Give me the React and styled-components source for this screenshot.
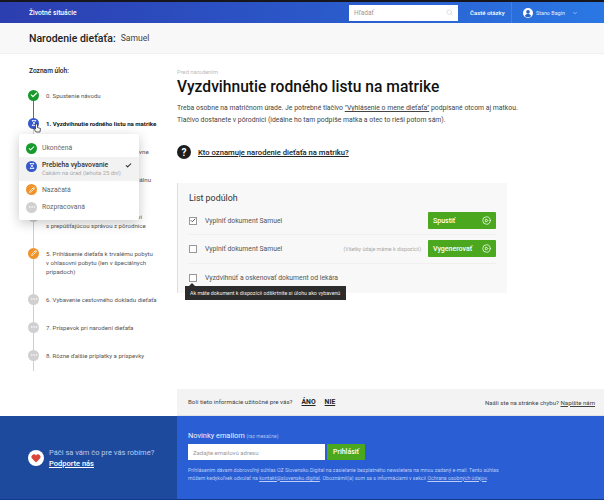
import React from 'react';
import styled, { createGlobalStyle } from 'styled-components';
import { Check, Pencil, MoreHorizontal, Hourglass, Search, ChevronDown, CirclePlay, Heart } from 'lucide-react';

const GlobalStyle = createGlobalStyle`
  html, body { margin: 0; padding: 0; background: #fff; }
  body { font-family: Roboto, "Liberation Sans", sans-serif; color: #333; overflow: hidden; }
  * { box-sizing: border-box; }
`;

const Page = styled.div`
  width: 604px;
  height: 500px;
  display: flex;
  flex-direction: column;
  border-top: 2px solid #16161c;
  border-bottom: 1px solid #123a8c;
  overflow: hidden;
`;

const Header = styled.header`
  height: 21px;
  flex: none;
  display: flex;
  align-items: center;
  padding-left: 29px;
  background: linear-gradient(90deg, #2c3eb0 0%, #2b57c8 50%, #2a78e4 100%);
  color: #fff;
  font-size: 6.7px;
  font-weight: 500;
`;

const Brand = styled.div`
  width: 320px;
`;

const SearchBox = styled.div`
  width: 109px;
  height: 16px;
  background: #fff;
  display: flex;
  align-items: center;
  justify-content: space-between;
  padding: 0 5px;
  color: #999;
  font-size: 6.5px;
  font-weight: 400;
`;

const HeaderLink = styled.div`
  width: 54px;
  height: 100%;
  padding-left: 12px;
  display: flex;
  align-items: center;
  font-size: 6px;
  border-right: 1px solid rgba(255, 255, 255, 0.12);
  white-space: nowrap;
`;

const UserMenu = styled.div`
  display: flex;
  align-items: center;
  gap: 3px;
  padding-left: 11px;
  font-size: 5.4px;
  font-weight: 400;
  color: #e4edff;
`;

const TitleBar = styled.div`
  height: 31px;
  flex: none;
  display: flex;
  align-items: center;
  gap: 5px;
  padding-left: 29px;
  background: #f8f8f8;
  border-bottom: 1px solid #f0f0f0;
`;

const TitleMain = styled.h2`
  margin: 0;
  font-size: 10.5px;
  font-weight: 500;
  color: #222;
`;

const TitleSub = styled.span`
  font-size: 8.6px;
  color: #444;
`;

const Body = styled.main`
  flex: 1;
  display: flex;
  padding-left: 29px;
  position: relative;
`;

const Sidebar = styled.aside`
  width: 148px;
  flex: none;
  position: relative;
  padding-top: 13px;
`;

const SidebarTitle = styled.div`
  font-size: 6.6px;
  font-weight: 500;
  color: #222;
  line-height: 9px;
  margin-bottom: 10px;
`;

const Steps = styled.ol`
  list-style: none;
  margin: 0;
  padding: 0;
`;

const Step = styled.li`
  position: relative;
  padding: 4.5px 0 14.5px 17px;
  font-size: 6.1px;
  line-height: 9px;
  color: ${(p) => (p.$active ? '#111' : '#555')};
  font-weight: ${(p) => (p.$active ? 700 : 400)};
  &::before {
    content: '';
    position: absolute;
    left: 4px;
    top: 9px;
    bottom: -9px;
    width: 1px;
    background: ${(p) => (p.$done ? '#1a9e2d' : '#cfcfcf')};
  }
  &:last-child::before {
    bottom: 3px;
  }
`;

const StepText = styled.div`
  padding-left: 6px;
  text-indent: -6px;
  white-space: nowrap;
`;

const tones = {
  done: '#179a2c',
  active: '#3558cc',
  started: '#f0932b',
  idle: '#d0d0d0',
};

const StatusDot = styled.span`
  width: 11px;
  height: 11px;
  border-radius: 50%;
  flex: none;
  display: flex;
  align-items: center;
  justify-content: center;
  color: #fff;
  background: ${(p) => tones[p.$tone]};
`;

const StepDot = styled(StatusDot)`
  position: absolute;
  left: -1px;
  top: 3.5px;
  z-index: 1;
`;

const StatusMenu = styled.div`
  position: absolute;
  left: -10px;
  top: 80px;
  width: 120px;
  height: 86px;
  padding-top: 5px;
  background: #fff;
  border-radius: 2px;
  box-shadow: 0 3px 12px rgba(0, 0, 0, 0.22);
  z-index: 3;
`;

const StatusRow = styled.div`
  display: flex;
  gap: 5px;
  padding: ${(p) => (p.$selected ? '3.5px 7px 0' : '0 7px')};
  height: ${(p) => p.$height}px;
  align-items: ${(p) => (p.$selected ? 'flex-start' : 'center')};
  position: relative;
  font-size: 6.8px;
  line-height: 8px;
  color: ${(p) => (p.$selected ? '#333' : '#666')};
  font-weight: ${(p) => (p.$selected ? 500 : 400)};
  background: ${(p) => (p.$selected ? '#f2f2f2' : 'transparent')};
`;

const StatusHint = styled.div`
  font-size: 5.9px;
  font-weight: 400;
  color: #aaa;
  line-height: 8px;
`;

const StatusTick = styled.span`
  position: absolute;
  right: 7px;
  top: 4.5px;
  color: #222;
  display: flex;
`;

const Cursor = styled.svg`
  position: absolute;
  left: 4px;
  top: 69px;
  z-index: 2;
`;

const Content = styled.section`
  width: 340px;
  padding-top: 14px;
`;

const Eyebrow = styled.div`
  font-size: 5.8px;
  color: #bbb;
  line-height: 8px;
`;

const Heading = styled.h1`
  margin: 1px 0 0;
  font-size: 15.6px;
  line-height: 20px;
  font-weight: 500;
  color: #111;
  white-space: nowrap;
`;

const Lead = styled.p`
  margin: 6px 0 0;
  font-size: 6.85px;
  line-height: 11.5px;
  color: #444;
  white-space: nowrap;
`;

const LeadLink = styled.span`
  text-decoration: underline;
`;

const Question = styled.div`
  display: flex;
  align-items: center;
  gap: 7px;
  margin-top: 19px;
  font-size: 7.65px;
  font-weight: 500;
  color: #222;
  text-decoration: underline;
`;

const QuestionMark = styled.span`
  width: 14px;
  height: 14px;
  border-radius: 50%;
  background: #1c1c1c;
  color: #fff;
  font-size: 10px;
  font-weight: 700;
  display: flex;
  align-items: center;
  justify-content: center;
`;

const TaskPanel = styled.div`
  position: relative;
  width: 330px;
  height: 110px;
  margin-top: 24px;
  padding: 9px 11px 0;
  background: #f8f8f8;
  border-left: 1px solid #dedede;
`;

const TaskTitle = styled.h3`
  margin: 0 0 3px;
  font-size: 8.9px;
  line-height: 12px;
  font-weight: 400;
  color: #333;
`;

const TaskRow = styled.div`
  height: 28.3px;
  display: flex;
  align-items: center;
  font-size: 6.8px;
  color: #555;
  border-bottom: ${(p) => (p.$last ? 'none' : '1px solid #f0f0f0')};
`;

const Box = styled.span`
  width: 8px;
  height: 8px;
  flex: none;
  margin-right: 8px;
  background: #fff;
  border: 1px solid #999;
  display: flex;
  align-items: center;
  justify-content: center;
  color: #222;
`;

const TaskLabel = styled.span`
  flex: 1;
`;

const TaskNote = styled.span`
  font-size: 5.3px;
  color: #aaa;
  margin-right: 7px;
`;

const GreenButton = styled.button`
  width: ${(p) => p.$width}px;
  height: ${(p) => p.$height}px;
  border: 0;
  padding: 0 5px;
  display: flex;
  align-items: center;
  justify-content: ${(p) => (p.$center ? 'center' : 'space-between')};
  background: #4aa71e;
  color: #fff;
  font-family: inherit;
  font-size: 7px;
  font-weight: 500;
  border-radius: 1px;
`;

const Tooltip = styled.div`
  position: absolute;
  left: 7px;
  top: 103px;
  width: 161px;
  height: 14px;
  background: #2c2c2c;
  color: #eee;
  font-size: 5.3px;
  display: flex;
  align-items: center;
  padding-left: 5px;
  white-space: nowrap;
  &::before {
    content: '';
    position: absolute;
    left: 4px;
    top: -3px;
    border-left: 3px solid transparent;
    border-right: 3px solid transparent;
    border-bottom: 3px solid #2c2c2c;
  }
`;

const Feedback = styled.div`
  height: 27px;
  flex: none;
  margin-left: 177px;
  padding: 0 9px 0 11px;
  display: flex;
  align-items: center;
  background: #f3f3f3;
  font-size: 6.2px;
  color: #444;
  border-bottom: 1px solid #e4e4e4;
`;

const Vote = styled.span`
  margin-left: ${(p) => p.$gap}px;
  font-size: 6.8px;
  font-weight: 700;
  color: #222;
  text-decoration: underline;
`;

const FeedbackRight = styled.span`
  margin-left: auto;
  font-size: 6.1px;
  a {
    color: inherit;
    text-decoration: underline;
  }
`;

const Footer = styled.footer`
  height: 83px;
  flex: none;
  display: flex;
  color: #fff;
`;

const Support = styled.div`
  width: 177px;
  background: #1e4a9e;
  display: flex;
  align-items: center;
  gap: 5px;
  padding-left: 28px;
`;

const HeartBadge = styled.span`
  width: 16px;
  height: 16px;
  border-radius: 50%;
  background: #fff;
  color: #d8473c;
  display: flex;
  align-items: center;
  justify-content: center;
`;

const SupportText = styled.div`
  font-size: 7.5px;
  line-height: 11px;
  color: #b9cbee;
  white-space: nowrap;
`;

const SupportLink = styled.div`
  color: #fff;
  font-weight: 500;
  text-decoration: underline;
`;

const Newsletter = styled.div`
  flex: 1;
  background: #295ed4;
  padding: 15px 0 0 11px;
`;

const NewsTitle = styled.div`
  font-size: 7.4px;
  line-height: 10px;
  color: #eef3ff;
  small {
    font-size: 5px;
    color: #a9c2f3;
  }
`;

const NewsForm = styled.div`
  display: flex;
  gap: 2px;
  margin-top: 3px;
`;

const NewsInput = styled.div`
  width: 137px;
  height: 16px;
  background: #fff;
  color: #999;
  font-size: 6px;
  display: flex;
  align-items: center;
  padding-left: 5px;
`;

const NewsLegal = styled.p`
  margin: 7px 0 0;
  font-size: 5.2px;
  line-height: 7.6px;
  color: #b9cdf6;
  white-space: nowrap;
  a {
    color: inherit;
    text-decoration: underline;
  }
`;

const dots = <MoreHorizontal size={8} />;

const steps = [
  { tone: 'done', text: '0. Spustenie návodu', done: true, icon: <Check size={8} strokeWidth={3.5} /> },
  { tone: 'active', text: '1. Vyzdvihnutie rodného listu na matrike', active: true, icon: <Hourglass size={6} strokeWidth={3} /> },
  { tone: 'idle', text: '2. Prihlásenie do zdravotnej poisťovne', icon: dots },
  { tone: 'idle', text: ['3. Informovanie úradu práce a sociálnu', 'poisťovňu o narodení a'], icon: dots },
  { tone: 'idle', text: ['4. Odovzdanie dokumentov lekárovi', 's prepúšťajúcou správou z pôrodnice'], icon: dots },
  { tone: 'started', text: ['5. Prihlásenie dieťaťa k trvalému pobytu', 'v ohlasovni pobytu (len v špeciálnych', 'prípadoch)'], icon: <Pencil size={6} strokeWidth={3} /> },
  { tone: 'idle', text: '6. Vybavenie cestovného dokladu dieťaťa', icon: dots },
  { tone: 'idle', text: '7. Príspevok pri narodení dieťaťa', icon: dots },
  { tone: 'idle', text: '8. Rôzne ďalšie príplatky a príspevky', icon: dots },
];

export default function App() {
  return (
    <>
      <GlobalStyle />
      <Page>
        <Header>
          <Brand>Životné situácie</Brand>
          <SearchBox>
            Hľadať
            <Search size={7} color="#ccc" />
          </SearchBox>
          <HeaderLink>Časté otázky</HeaderLink>
          <UserMenu>
            <svg width="10" height="10" viewBox="0 0 10 10">
              <circle cx="5" cy="5" r="5" fill="#fff" />
              <circle cx="5" cy="3.9" r="1.8" fill="#2a5fc8" />
              <path d="M1.9 8c.6-1.3 1.8-1.9 3.1-1.9s2.5.6 3.1 1.9a4.2 4.2 0 0 1-6.2 0z" fill="#2a5fc8" />
            </svg>
            Stano Bagin
            <ChevronDown size={6} style={{ marginLeft: 4 }} />
          </UserMenu>
        </Header>
        <TitleBar>
          <TitleMain>Narodenie dieťaťa:</TitleMain>
          <TitleSub>Samuel</TitleSub>
        </TitleBar>
        <Body>
          <Sidebar>
            <SidebarTitle>Zoznam úloh:</SidebarTitle>
            <Steps>
              {steps.map((step) => (
                <Step key={step.tone + step.text} $done={step.done} $active={step.active}>
                  <StepDot $tone={step.tone}>{step.icon}</StepDot>
                  {[].concat(step.text).map((line) => (
                    <StepText key={line}>{line}</StepText>
                  ))}
                </Step>
              ))}
            </Steps>
            <Cursor width="8" height="10" viewBox="0 0 8 10">
              <path d="M2.5 1v5L1.2 5 1 6l2 3h4l.5-3.5-3-1V1z" fill="#fff" stroke="#222" strokeWidth="0.7" />
            </Cursor>
            <StatusMenu>
              <StatusRow $height={18}>
                <StatusDot $tone="done"><Check size={7} strokeWidth={3.5} /></StatusDot>
                Ukončená
              </StatusRow>
              <StatusRow $height={24} $selected>
                <StatusDot $tone="active"><Hourglass size={6} strokeWidth={3} /></StatusDot>
                <div>
                  Prebieha vybavovanie
                  <StatusHint>Čakám na úrad (lehota 25 dní)</StatusHint>
                </div>
                <StatusTick><Check size={7} strokeWidth={3.5} /></StatusTick>
              </StatusRow>
              <StatusRow $height={17}>
                <StatusDot $tone="started"><Pencil size={6} strokeWidth={3} /></StatusDot>
                Nazačatá
              </StatusRow>
              <StatusRow $height={18}>
                <StatusDot $tone="idle">{dots}</StatusDot>
                Rozpracovaná
              </StatusRow>
            </StatusMenu>
          </Sidebar>
          <Content>
            <Eyebrow>Pred narodením</Eyebrow>
            <Heading>Vyzdvihnutie rodného listu na matrike</Heading>
            <Lead>
              Treba osobne na matričnom úrade. Je potrebné tlačivo <LeadLink>"Vyhlásenie o mene dieťaťa"</LeadLink> podpísané otcom aj matkou.
              <br />
              Tlačivo dostanete v pôrodnici (ideálne ho tam podpíše matka a otec to rieši potom sám).
            </Lead>
            <Question>
              <QuestionMark>?</QuestionMark>
              Kto oznamuje narodenie dieťaťa na matriku?
            </Question>
            <TaskPanel>
              <TaskTitle>List podúloh</TaskTitle>
              <TaskRow>
                <Box><Check size={7} strokeWidth={3} /></Box>
                <TaskLabel>Vyplniť dokument Samuel</TaskLabel>
                <GreenButton $width={68} $height={17}>Spustiť <CirclePlay size={9} /></GreenButton>
              </TaskRow>
              <TaskRow>
                <Box />
                <TaskLabel>Vyplniť dokument Samuel</TaskLabel>
                <TaskNote>(Všetky údaje máme k dispozícii)</TaskNote>
                <GreenButton $width={68} $height={17}>Vygenerovať <CirclePlay size={9} /></GreenButton>
              </TaskRow>
              <TaskRow $last>
                <Box />
                <TaskLabel>Vyzdvihnúť a oskenovať dokument od lekára</TaskLabel>
              </TaskRow>
              <Tooltip>Ak máte dokument k dispozícii odškrtnite si úlohu ako vybavenú</Tooltip>
            </TaskPanel>
          </Content>
        </Body>
        <Feedback>
          Boli tieto informácie užitočné pre vás?
          <Vote $gap={9}>ÁNO</Vote>
          <Vote $gap={9}>NIE</Vote>
          <FeedbackRight>Našli ste na stránke chybu? <a>Napíšte nám</a></FeedbackRight>
        </Feedback>
        <Footer>
          <Support>
            <HeartBadge><Heart size={10} fill="currentColor" /></HeartBadge>
            <SupportText>
              Páči sa vám čo pre vás robíme?
              <SupportLink>Podporte nás</SupportLink>
            </SupportText>
          </Support>
          <Newsletter>
            <NewsTitle>Novinky emailom <small>(raz mesačne)</small></NewsTitle>
            <NewsForm>
              <NewsInput>Zadajte emailovú adresu</NewsInput>
              <GreenButton $width={38} $height={16} $center>Prihlásiť</GreenButton>
            </NewsForm>
            <NewsLegal>
              Prihlásením dávam dobrovoľný súhlas OZ Slovensko.Digital na zasielanie bezplatného newsletera na mnou zadaný e-mail. Tento súhlas
              <br />
              môžem kedykoľvek odvolať na <a>kontakt@slovensko.digital</a>. Oboznámil(a) som sa s informáciami v sekcii <a>Ochrana osobných údajov</a>.
            </NewsLegal>
          </Newsletter>
        </Footer>
      </Page>
    </>
  );
}
